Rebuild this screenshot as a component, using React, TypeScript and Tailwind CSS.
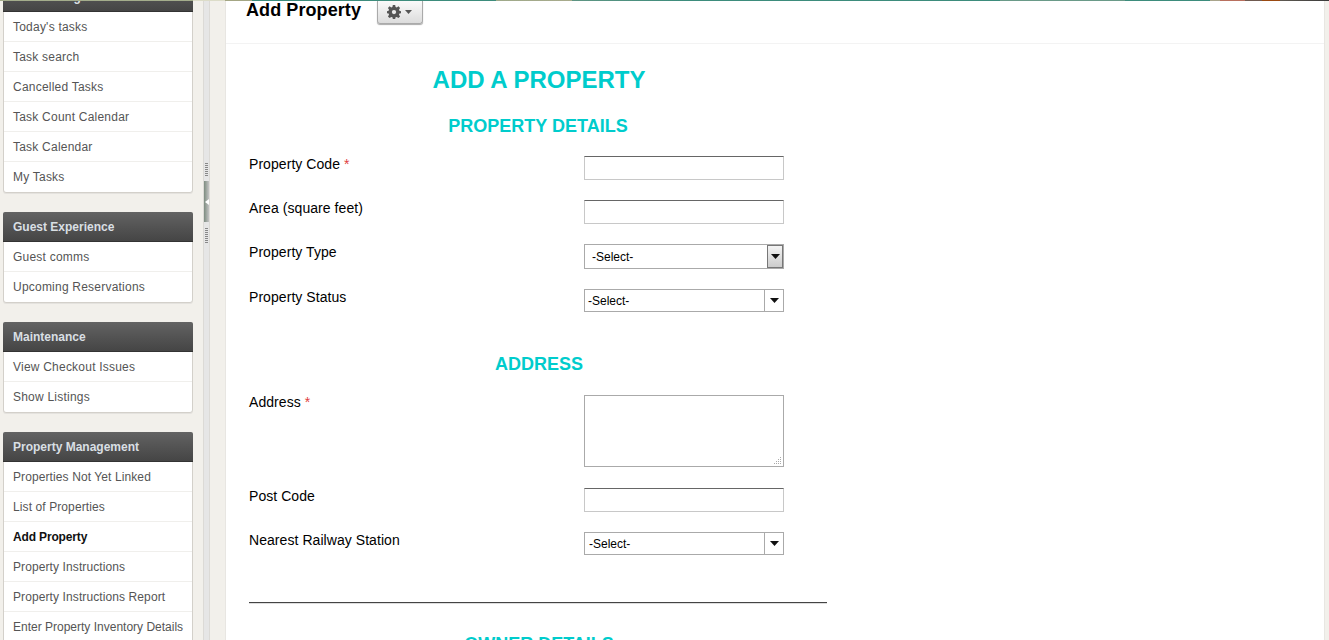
import React from "react";

const font = "font-['Liberation_Sans',Arial,sans-serif]";

function track(t: string) {
  if (t.startsWith("Enter")) return "tracking-[0px]";
  if (t.startsWith("Propert") || t.startsWith("List")) return "tracking-[0.1px]";
  return "tracking-[0.22px]";
}

function Panel({ title, items, active }: { title: string; items: string[]; active?: string }) {
  return (
    <div className="mb-[19px] w-[190px] rounded-[3px] border border-[#d3d0ca] bg-white shadow-[0_1px_0_#e4e2de]">
      <div className="-mx-px -mt-px h-[30px] rounded-t-[2px] border-b border-[#333] bg-gradient-to-b from-[#636363] to-[#454545] px-[10px] text-[12px] font-bold leading-[30px] text-[#d9dfe3]">
        {title}
      </div>
      {items.map((t, i) => (
        <div
          key={t}
          className={`h-[30px] whitespace-nowrap px-[9px] text-[12px] leading-[30px] ${i < items.length - 1 ? "border-b border-[#f0efec]" : ""} ${t === active ? "font-bold tracking-[-0.15px] text-[#111]" : `${track(t)} text-[#555]`}`}
        >
          {t}
        </div>
      ))}
    </div>
  );
}

function Label({ children, req, cls = "" }: { children: React.ReactNode; req?: boolean; cls?: string }) {
  return (
    <div className={`w-[335px] shrink-0 text-[14px] leading-[16px] tracking-[0.06px] text-black ${cls}`}>
      {children}
      {req && <span className="text-[#e04040]"> *</span>}
    </div>
  );
}

function Field() {
  return (
    <input
      readOnly
      className="h-6 w-[200px] border border-[#c8c8c8] border-t-[#666] bg-white outline-none"
    />
  );
}

function Arrow() {
  return (
    <svg width="9" height="5" viewBox="0 0 9 5" aria-hidden="true">
      <path d="M0 0h9L4.500 5z" fill="#111" />
    </svg>
  );
}

function SelectA() {
  return (
    <div className="flex h-[25px] w-[200px] items-center border border-[#aaa] bg-white pl-[7px] text-[12px] text-black">
      <span className="flex-1">-Select-</span>
      <span className="flex h-[23px] w-4 items-center justify-center border border-[#777] bg-gradient-to-b from-[#f4f4f4] to-[#ccc]">
        <Arrow />
      </span>
    </div>
  );
}

function SelectB({ pl }: { pl: string }) {
  return (
    <div className={`flex h-[23px] w-[200px] items-center border border-[#aaa] bg-white text-[12px] text-black ${pl}`}>
      <span className="flex-1">-Select-</span>
      <span className="flex h-full w-[19px] items-center justify-center border-l border-[#aaa]">
        <Arrow />
      </span>
    </div>
  );
}

function Grip({ h }: { h: string }) {
  return <div className={`w-[3px] bg-[repeating-linear-gradient(180deg,#888_0,#888_1px,transparent_1px,transparent_2px)] ${h}`} />;
}

export default function App() {
  return (
    <div className={`${font} flex h-[640px] w-full flex-col overflow-hidden bg-[#f2f0eb]`}>
      <div className="h-px shrink-0 bg-[linear-gradient(90deg,#a4ad8c_0,#a4ad8c_193px,#dcdcc8_193px,#dcdcc8_225px,#a4a684_225px,#a4a684_252px,#3d8c7c_252px,#3d8c7c_496px,#9fa98a_496px,#a8ab8c_572px,#5f9583_572px,#3d8c7c_685px,#3d8c7c_1000px,#6a9a88_1000px,#6a9a88_1125px,#3d8c7c_1125px,#3d8c7c_1210px,#a9a58c_1210px,#a9a58c_1220px,#b8705f_1220px,#b8705f_1245px,#6f5a50_1245px,#6f5a50_1262px,#9a4a12_1262px,#9a4a12_1280px,#5f5a52_1280px,#3a3a3a_1329px)]" />
      <div className="flex min-h-0 flex-1">
        <aside className="w-[203px] shrink-0 overflow-hidden pl-[3px]">
          <div className="-mt-[19px]">
            <Panel
              title="Task Management"
              items={["Today's tasks", "Task search", "Cancelled Tasks", "Task Count Calendar", "Task Calendar", "My Tasks"]}
            />
            <Panel title="Guest Experience" items={["Guest comms", "Upcoming Reservations"]} />
            <Panel title="Maintenance" items={["View Checkout Issues", "Show Listings"]} />
            <Panel
              title="Property Management"
              active="Add Property"
              items={[
                "Properties Not Yet Linked",
                "List of Properties",
                "Add Property",
                "Property Instructions",
                "Property Instructions Report",
                "Enter Property Inventory Details",
              ]}
            />
          </div>
        </aside>

        <div className="flex w-[7px] shrink-0 flex-col items-center border-x border-[#dcdad6] bg-[#e6e6e6] pt-[162px]">
          <Grip h="h-[13px]" />
          <div className="mt-[5px] flex h-[41px] w-[5px] items-center justify-center bg-gradient-to-r from-[#7d8c80] to-[#c4c4c4]">
            <svg width="4" height="6" viewBox="0 0 4 6" aria-hidden="true">
              <path d="M4 0v6L0 3z" fill="#fff" />
            </svg>
          </div>
          <div className="mt-[6px]"><Grip h="h-[16px]" /></div>
        </div>

        <main className="ml-[15px] mr-1 min-w-0 flex-1 overflow-hidden border-x border-[#e8e6e2] bg-white">
          <div className="flex h-[43px] items-start border-b border-[#f3f3f3] pl-5">
            <h1 className="mt-[-1px] text-[18px] font-bold leading-[21px] tracking-[0.08px] text-black">Add Property</h1>
            <button className="ml-4 flex h-[23px] w-[46px] items-center justify-center gap-[4px] rounded-b-[3px] border border-t-0 border-[#aaa] bg-gradient-to-b from-[#fafafa] to-[#dcdcdc] shadow-[0_1px_1px_#aaa]">
              <svg width="14" height="14" viewBox="0 0 24 24" aria-hidden="true">
                <path
                  fill="#555"
                  fillRule="evenodd"
                  d="M10 0h4l.7 3.400 2 .8L19.600 2.300 22.400 5.100l-1.900 2.900.8 2L24 10.500v3.500l-2.700.6-.8 2 1.900 2.900-2.800 2.800-2.900-1.900-2 .8L14 24h-4l-.7-2.800-2-.8-2.900 1.900-2.800-2.800 1.900-2.900-.8-2L0 14v-3.500l2.700-.5.8-2L1.600 5.100 4.400 2.300l2.900 1.900 2-.8zM12 8.500a3.700 3.700 0 1 0 0 7.400 3.700 3.700 0 0 0 0-7.400z"
                />
              </svg>
              <svg width="7" height="4" viewBox="0 0 7 4" aria-hidden="true">
                <path d="M0 0h7L3.500 4z" fill="#555" />
              </svg>
            </button>
          </div>

          <div className="ml-[23px] w-[578px]">
            <h2 className="mt-[22px] pl-[2px] text-center text-[24px] font-bold leading-[28px] text-[#00cccc]">ADD A PROPERTY</h2>
            <h3 className="mt-[22px] text-center text-[18px] font-bold leading-[21px] text-[#00cccc]">PROPERTY DETAILS</h3>

            <div className="mt-[19px] flex h-6 items-start"><Label req>Property Code</Label><Field /></div>
            <div className="mt-5 flex h-6 items-start"><Label>Area (square feet)</Label><Field /></div>
            <div className="mt-5 flex h-[25px] items-start"><Label>Property Type</Label><SelectA /></div>
            <div className="mt-5 flex h-[23px] items-start"><Label>Property Status</Label><SelectB pl="pl-[3px]" /></div>

            <h3 className="mt-[42px] pl-[2px] text-center text-[18px] font-bold leading-[21px] text-[#00cccc]">ADDRESS</h3>

            <div className="mt-5 flex h-[72px] items-start">
              <Label req cls="-mt-px">Address</Label>
              <div className="relative h-[72px] w-[200px]">
                <textarea readOnly className="block h-[72px] w-[200px] resize-none border border-[#aaa] bg-white outline-none" />
                <svg className="absolute bottom-[2px] right-[2px]" width="8" height="8" viewBox="0 0 8 8" aria-hidden="true">
                  <path fill="#aaa" d="M6 0h1v1H6zM4 2h1v1H4zM6 2h1v1H6zM2 4h1v1H2zM4 4h1v1H4zM6 4h1v1H6zM0 6h1v1H0zM2 6h1v1H2zM4 6h1v1H4zM6 6h1v1H6z" />
                </svg>
              </div>
            </div>
            <div className="mt-[21px] flex h-6 items-start"><Label>Post Code</Label><Field /></div>
            <div className="mt-5 flex h-[23px] items-start"><Label>Nearest Railway Station</Label><SelectB pl="pl-1" /></div>

            <hr className="mt-[47px] border-0 border-t border-[#444] shadow-[0_1px_0_#ddd]" />

            <h3 className="mt-[31px] pl-[2px] text-center text-[18px] font-bold leading-[21px] text-[#00cccc]">OWNER DETAILS</h3>
          </div>
        </main>
      </div>
    </div>
  );
}
